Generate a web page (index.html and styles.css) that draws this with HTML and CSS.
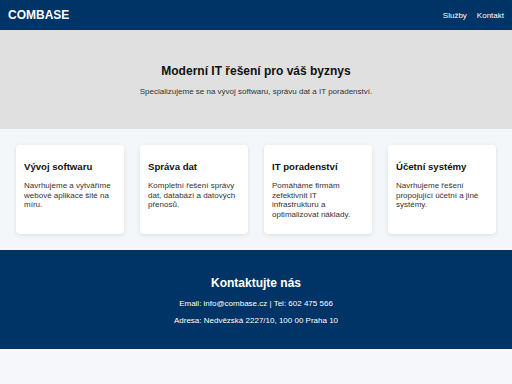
FILE: index.html
```html
<!DOCTYPE html>
<html lang="cs">
<head>
    <meta charset="UTF-8">
    <meta name="viewport" content="width=device-width, initial-scale=1.0">
    <title>COMBASE</title>
    <link rel="stylesheet" href="styles.css">
</head>
<body>
    <header class="site-header">
        <div class="logo">COMBASE</div>
        <nav class="nav">
            <a href="#sluzby">Služby</a>
            <a href="#kontakt">Kontakt</a>
        </nav>
    </header>

    <section class="hero">
        <h2>Moderní IT řešení pro váš byznys</h2>
        <p>Specializujeme se na vývoj softwaru, správu dat a IT poradenství.</p>
    </section>

    <section class="services" id="sluzby">
        <div class="card">
            <h3>Vývoj softwaru</h3>
            <p>Navrhujeme a vytváříme webové aplikace šité na míru.</p>
        </div>
        <div class="card">
            <h3>Správa dat</h3>
            <p>Kompletní řešení správy dat, databází a datových přenosů.</p>
        </div>
        <div class="card">
            <h3>IT poradenství</h3>
            <p>Pomáháme firmám zefektivnit IT infrastrukturu a optimalizovat náklady.</p>
        </div>
        <div class="card">
            <h3>Účetní systémy</h3>
            <p>Navrhujeme řešení propojující účetní a jiné systémy.</p>
        </div>
    </section>

    <footer class="contact" id="kontakt">
        <h2>Kontaktujte nás</h2>
        <p>Email: info@combase.cz | Tel: 602 475 566</p>
        <p>Adresa: Nedvězská 2227/10, 100 00 Praha 10</p>
    </footer>
</body>
</html>
```

FILE: styles.css
```css
body {
    margin: 0;
    font-family: "Liberation Sans", Arial, sans-serif;
    background-color: #f5f7fa;
    color: #333;
}
.site-header {
    height: 30px;
    padding: 0 8px;
    background-color: #003366;
    color: #fff;
    display: flex;
    align-items: center;
    justify-content: space-between;
}
.logo {
    font-size: 12px;
    font-weight: bold;
}
.nav {
    display: flex;
    gap: 10px;
}
.nav a {
    color: #fff;
    text-decoration: none;
    font-size: 8px;
}
.hero {
    background-color: #e0e0e0;
    text-align: center;
    padding: 34px 16px 32px;
    height: 33px;
}
.hero h2 {
    margin: 0 0 9px;
    font-size: 12px;
    line-height: 14px;
    color: #111;
}
.hero p {
    margin: 0;
    font-size: 8px;
    line-height: 10px;
}
.services {
    background-color: #f4f7f9;
    padding: 16px;
    display: grid;
    grid-template-columns: repeat(4, 1fr);
    gap: 16px;
}
.card {
    background-color: #fff;
    border-radius: 4px;
    box-shadow: 0 1px 4px rgba(0, 0, 0, 0.1);
    padding: 8px;
    height: 73px;
}
.card h3 {
    margin: 8px 0 9px;
    font-size: 9.6px;
    line-height: 11px;
    color: #111;
}
.card p {
    margin: 0;
    font-size: 8px;
    line-height: 9.6px;
}
.contact {
    background-color: #003366;
    color: #fff;
    text-align: center;
    padding: 26px 16px 23px;
    height: 50px;
}
.contact h2 {
    margin: 0 0 9px;
    font-size: 12px;
    line-height: 14px;
}
.contact p {
    margin: 0 0 7px;
    font-size: 8px;
    line-height: 10px;
}
```
